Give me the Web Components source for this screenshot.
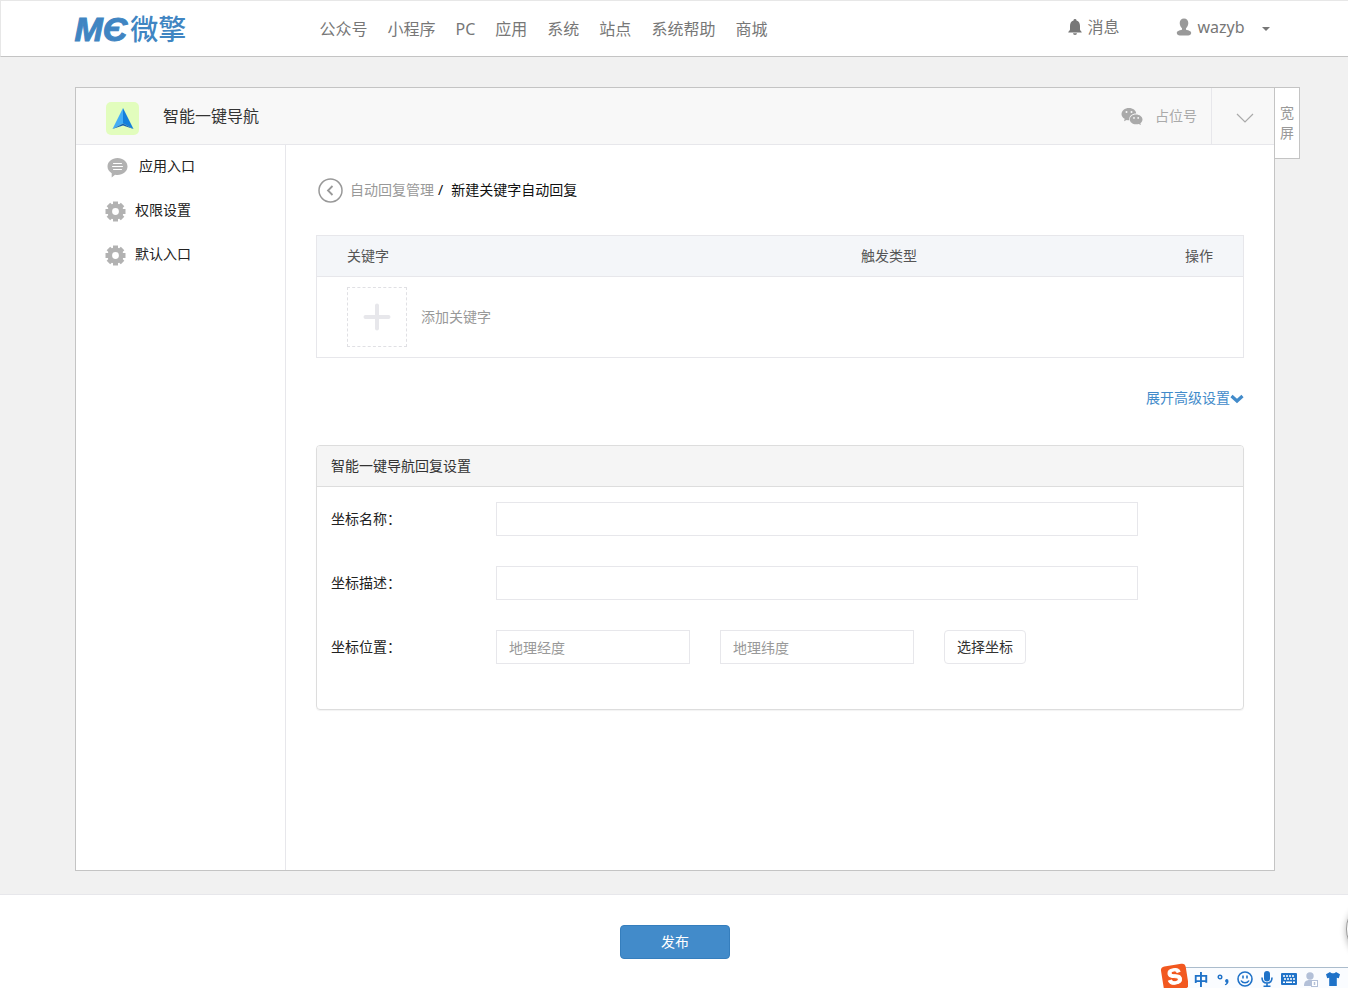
<!DOCTYPE html>
<html lang="zh-CN">
<head>
<meta charset="utf-8">
<title>新建关键字自动回复</title>
<style>
  body {
    margin: 0;
    min-height: 100vh;
    display: flex;
    flex-direction: column;
    background: #f1f1f1;
    color: #333;
    font: 14px/20px "Noto Sans", "Noto Sans CJK SC", sans-serif;
  }
  app-shell {
    flex: 1;
  }
</style>
</head>
<body>
<site-header></site-header>
<app-shell>
  <side-link slot="menu" icon="comment">应用入口</side-link>
  <side-link slot="menu" icon="gear">权限设置</side-link>
  <side-link slot="menu" icon="gear">默认入口</side-link>
  <reply-editor></reply-editor>
</app-shell>
<publish-bar>发布</publish-bar>
<float-ball></float-ball>
<ime-bar></ime-bar>

<script>
const gearTeeth = [0, 45, 90, 135, 180, 225, 270, 315]
  .map(a => `<path d="M8 5V.5h5V5z" transform="rotate(${a} 10.5 10.5)"/>`)
  .join('');

const ICONS = {
  bell: [14, 16, '<path d="M7 0a1.5 1.5 0 0 1 1.5 1.6C11 2.4 12 4.6 12 7v3.5c0 1.3 1.8 1.7 1.8 3H.2c0-1.3 1.8-1.7 1.8-3V7c0-2.4 1-4.6 3.5-5.4A1.5 1.5 0 0 1 7 0zM5 14.3h4a2 1.7 0 0 1-4 0z"/>'],
  user: [16, 18, '<path d="M8 .5c2.6 0 4.3 1.8 4.3 4.5 0 2.2-1 4.200-2.300 5.200v1.600c2.800.9 5.200 1 5.200 3.300 0 1.600-1.400 2.400-3 2.400H3.800c-1.600 0-3-.8-3-2.400 0-2.300 2.400-2.400 5.200-3.300v-1.600C4.700 9.200 3.700 7.200 3.700 5 3.700 2.300 5.400.5 8 .5z"/>'],
  comment: [25, 21, '<path d="M12.5 1C18 1 22.5 4.600 22.500 9.500S18 18 12.500 18c-1 0-1.700-.1-2.500-.3L6.700 20.500v-4.300C4 14.600 2.500 12.200 2.500 9.500 2.500 4.600 7 1 12.500 1z"/><path d="M8.500 6.500h8M7.500 9.500h10M8.500 12.500h8" stroke="#fff" stroke-linecap="round"/>'],
  gear: [21, 21, `${gearTeeth}<circle cx="10.5" cy="10.5" r="5.700" fill="none" stroke="currentColor" stroke-width="4.600"/>`],
  wechat: [22, 18, '<path fill-rule="evenodd" d="M8 1c4 0 7 2.400 7.200 5.500C11 6.500 8.200 9 8.200 12.500v.8c-.9 0-1.700-.1-2.500-.4L3 14.300l.700-2.500C1.700 10.700.5 9 .5 7.200.5 3.700 3.800 1 8 1zM5.500 4a1 1 0 1 0 0 2 1 1 0 0 0 0-2zm5 0a1 1 0 1 0 0 2 1 1 0 0 0 0-2z"/><path fill-rule="evenodd" d="M15 7.500c3.600 0 6.500 2.200 6.500 5 0 1.500-.8 2.800-2.100 3.700l.5 1.700-2.200-1c-.8.2-1.700.4-2.700.4-3.600 0-6.200-2.200-6.200-4.800 0-2.800 2.600-5 6.200-5zM13 10a.9.9 0 1 0 0 1.800.9.9 0 0 0 0-1.800zm4.200 0a.9.9 0 1 0 0 1.800.9.9 0 0 0 0-1.800z"/>'],
  angle: [18, 18, '<path d="m1 5 8 8 8-8" fill="none" stroke="currentColor" stroke-width="1.200"/>'],
  back: [25, 25, '<g fill="none" stroke="currentColor"><circle cx="12.5" cy="12.5" r="11.500" stroke-width="1.500"/><path d="m14.500 8-4.500 4.500 4.500 4.500" stroke-width="1.800"/></g>'],
  plus: [28, 28, '<path d="M14 2.500v23M2.500 14h23" stroke="currentColor" stroke-width="4" stroke-linecap="round"/>'],
  chevron: [14, 14, '<path d="m1.500 5 5.500 5 5.500-5" fill="none" stroke="currentColor" stroke-width="3.200"/>'],
  caret: [8, 4, '<path d="M0 0h8L4 4z"/>'],
  arrow: [33, 33, '<rect width="33" height="33" rx="5" fill="#e2fdbd"/><path d="M17 6 27.500 27 17 21.500z" fill="#1480dc"/><path d="M17 6 6.500 27 17 21.500z" fill="#43adf5"/><path d="m6.500 27 10.500-5.500L27.500 27 17 23.500z" fill="#1762b4"/>'],
  sogou: [28, 26, '<g transform="rotate(-9 14 14)"><rect x="2" y="3" width="25" height="25" rx="4" fill="#f2581f"/><text x="14.500" y="22" text-anchor="middle" font-family="Liberation Sans" font-weight="bold" font-size="22" fill="#fff" stroke="#fff">S</text></g>'],
  punct: [12, 14, '<circle cx="3" cy="5" r="1.800" fill="none" stroke="currentColor" stroke-width="1.400"/><path d="M9.500 7a2 2 0 0 1 2 2.200c0 2-1.200 3.600-3.300 4l-.4-1c1-.3 1.500-.8 1.600-1.400A2 2 0 0 1 9.500 7z"/>'],
  smile: [16, 16, '<g fill="none" stroke="currentColor" stroke-width="1.600"><circle cx="8" cy="8" r="7"/><path d="M6 4.500v3M10 4.500v3M4 9.500c1.500 3 6.500 3 8 0"/></g>'],
  mic: [12, 16, '<rect x="3" width="6" height="10.500" rx="3"/><path d="M1 6.500c0 3.500 2 5.500 5 5.500s5-2 5-5.500M6 12v3M2.500 15.200h7" fill="none" stroke="currentColor" stroke-width="1.600"/>'],
  keyboard: [16, 12, '<rect width="16" height="12" rx="1"/><path d="M2 3h12M3 6h11" stroke="#fff" stroke-width="1.600" stroke-dasharray="2 1"/><path d="M2 9.200h2M5 9.200h6M12 9.200h2" stroke="#fff" stroke-width="1.600"/>'],
  account: [14, 15, '<circle cx="6" cy="4" r="3.700"/><path d="M0 14c0-4 1.500-6 6-6 1 0 2 .1 2.500.4V14z"/><rect x="7.500" y="8.500" width="6" height="6" fill="#fff" stroke="currentColor"/><path d="M10.500 10v3" stroke="currentColor" stroke-width="1.500"/>'],
  shirt: [14, 14, '<path d="M4 0c1 1.700 5 1.700 6 0l4 2.200-1.200 4-2-.5V14H3.200V5.700l-2 .5L0 2.200z"/>'],
};

// Returns the shadow root, filled with the given styles and markup.
function mount(el, css, html) {
  const root = el.attachShadow({ mode: 'open' });
  root.innerHTML = `<style>* { box-sizing: border-box; } ${css}</style>${html}`;
  return root;
}

class UiIcon extends HTMLElement {
  connectedCallback() {
    if (this.shadowRoot) return;
    const [w, h, body] = ICONS[this.getAttribute('name')];
    mount(this, `
      :host { display: inline-flex; flex: none; }
      svg { display: block; }
    `, `<svg width="${w}" height="${h}" viewBox="0 0 ${w} ${h}" fill="currentColor" aria-hidden="true">${body}</svg>`);
  }
}

class SiteLogo extends HTMLElement {
  constructor() {
    super();
    mount(this, `
      :host {
        display: flex;
        align-items: center;
        gap: 3px;
        flex: none;
        width: 112px;
        line-height: 48px;
        white-space: nowrap;
        color: #4085c2;
      }
      .mark {
        font: italic 700 34px/48px "Liberation Sans", sans-serif;
        -webkit-text-stroke: 1px #4085c2;
      }
      .name { font-size: 28px; font-weight: 500; }
    `, '<span class="mark">MЄ</span><span class="name">微擎</span>');
  }
}

class SiteHeader extends HTMLElement {
  constructor() {
    super();
    const links = ['公众号', '小程序', 'PC', '应用', '系统', '站点', '系统帮助', '商城'];
    mount(this, `
      :host {
        display: block;
        background: #fff;
        border-top: 1px solid #e7e7e7;
        border-left: 1px solid #e7e7e7;
        border-bottom: 1px solid #c4c4c4;
        font-size: 16px;
        color: #777;
      }
      .inner {
        display: flex;
        align-items: center;
        max-width: 1200px;
        height: 55px;
        margin: 0 auto;
      }
      a { color: inherit; text-decoration: none; }
      nav { display: flex; margin-left: 123px; }
      nav a { padding: 0 10px; white-space: nowrap; }
      .tools {
        display: flex;
        gap: 57px;
        margin-left: auto;
        padding: 0 5px 4px 0;
      }
      .tools a { display: flex; align-items: center; gap: 5px; }
      .person { color: #999; }
      .caret { margin: 4px 0 0 12px; }
    `, `
      <div class="inner">
        <site-logo></site-logo>
        <nav>${links.map(t => `<a href="#">${t}</a>`).join('')}</nav>
        <div class="tools">
          <a href="#"><ui-icon name="bell"></ui-icon>消息</a>
          <a href="#"><ui-icon class="person" name="user"></ui-icon>wazyb<ui-icon class="caret" name="caret"></ui-icon></a>
        </div>
      </div>
    `);
  }
}

class SideLink extends HTMLElement {
  constructor() {
    super();
    mount(this, `
      :host { display: block; }
      a {
        display: flex;
        align-items: center;
        gap: 9px;
        height: 44px;
        padding-left: 29px;
        color: #222;
        text-decoration: none;
      }
      ui-icon { color: #b2b2b2; }
      span { padding-bottom: 2px; }
    `, `<a href="#"><ui-icon name="${this.getAttribute('icon')}"></ui-icon><span><slot></slot></span></a>`);
  }
}

class AppShell extends HTMLElement {
  constructor() {
    super();
    mount(this, `
      :host {
        display: flex;
        padding: 30px 0 23px 2px;
      }
      .frame {
        position: relative;
        display: flex;
        flex-direction: column;
        flex: 1;
        max-width: 1200px;
        margin: 0 auto;
        background: #fff;
        border: 1px solid #c4c4c4;
      }
      header {
        display: flex;
        align-items: center;
        height: 57px;
        padding-left: 30px;
        background: #f8f8f8;
        border-bottom: 1px solid #e7e7eb;
      }
      .app-icon { margin-top: 4px; }
      h1 {
        margin: 0 auto 0 24px;
        font-size: 16px;
        font-weight: 400;
      }
      .account {
        display: flex;
        align-items: center;
        gap: 12px;
        padding-right: 14px;
        color: #aaa;
      }
      .toggle {
        display: flex;
        align-items: center;
        justify-content: center;
        align-self: stretch;
        width: 63px;
        padding: 3px 0 0 3px;
        border: 0;
        border-left: 1px solid #e7e7eb;
        background: none;
        color: #aaa;
      }
      .body { display: flex; flex: 1; }
      aside {
        flex: none;
        width: 210px;
        border-right: 1px solid #e7e7eb;
      }
      main { flex: 1; min-width: 0; padding: 30px; }
      .wide {
        position: absolute;
        top: -1px;
        left: 100%;
        width: 26px;
        height: 72px;
        padding: 0 5px;
        background: #fff;
        border: 1px solid #c4c4c4;
        font: inherit;
        line-height: 20px;
        color: #999;
      }
    `, `
      <div class="frame">
        <header>
          <ui-icon class="app-icon" name="arrow"></ui-icon>
          <h1>智能一键导航</h1>
          <div class="account"><ui-icon name="wechat"></ui-icon>占位号</div>
          <button class="toggle" type="button" aria-label="切换"><ui-icon name="angle"></ui-icon></button>
        </header>
        <div class="body">
          <aside><slot name="menu"></slot></aside>
          <main><slot></slot></main>
        </div>
        <button class="wide" type="button">宽屏</button>
      </div>
    `);
  }
}

class KeywordTable extends HTMLElement {
  constructor() {
    super();
    mount(this, `
      :host { display: block; border: 1px solid #e7e7eb; }
      table {
        width: 100%;
        table-layout: fixed;
        border-collapse: separate;
        border-spacing: 0;
      }
      .type { width: 250px; }
      .action { width: 162px; }
      th {
        height: 41px;
        padding: 0 30px;
        background: #f4f6f9;
        border-bottom: 1px solid #e7e7eb;
        font-weight: 400;
        text-align: left;
        color: #555;
      }
      th:last-child { text-align: right; }
      td { padding: 10px 30px; }
      button {
        display: flex;
        align-items: center;
        gap: 14px;
        padding: 0;
        border: 0;
        background: none;
        font: inherit;
        color: #999;
      }
      .box {
        display: flex;
        align-items: center;
        justify-content: center;
        width: 60px;
        height: 60px;
        border: 1px dashed #e0e0e4;
        color: #e7e7eb;
      }
    `, `
      <table>
        <colgroup><col><col class="type"><col class="action"></colgroup>
        <thead><tr><th>关键字</th><th>触发类型</th><th>操作</th></tr></thead>
        <tbody>
          <tr><td colspan="3"><button type="button"><span class="box"><ui-icon name="plus"></ui-icon></span>添加关键字</button></td></tr>
        </tbody>
      </table>
    `);
  }
}

class FormPanel extends HTMLElement {
  constructor() {
    super();
    mount(this, `
      :host {
        display: block;
        border: 1px solid #ddd;
        border-radius: 4px;
        box-shadow: 0 1px 1px rgba(0, 0, 0, 0.05);
      }
      header {
        padding: 10px 14px;
        background: #f5f5f5;
        border-bottom: 1px solid #ddd;
        border-radius: 3px 3px 0 0;
      }
      section { padding: 15px 14px; }
    `, `
      <header><slot name="heading"></slot></header>
      <section><slot></slot></section>
    `);
  }
}

class ReplyEditor extends HTMLElement {
  constructor() {
    super();
    mount(this, `
      :host { display: block; }
      a { color: inherit; text-decoration: none; }
      .crumbs {
        display: flex;
        align-items: center;
        height: 30px;
        margin-bottom: 30px;
        padding-left: 2px;
        color: #111;
      }
      .crumbs a { display: flex; align-items: center; gap: 7px; color: #999; }
      .crumbs i { margin: 0 8px 0 4px; font-style: normal; }
      .more { display: flex; justify-content: flex-end; margin: 30px 0 37px; }
      .more a { display: flex; align-items: center; color: #428bca; }
      .row { display: flex; align-items: center; margin-bottom: 30px; }
      .row label { flex: none; width: 165px; color: #222; }
      .field { flex: 1; min-width: 0; margin-right: 91px; }
      .thirds {
        display: grid;
        grid-template-columns: repeat(3, 1fr);
        gap: 30px;
        justify-items: start;
      }
      input {
        display: block;
        width: 100%;
        height: 34px;
        padding: 0 12px;
        border: 1px solid #e7e7eb;
        background: #fff;
        font: inherit;
        color: #333;
      }
      input::placeholder { color: #999; opacity: 1; }
      button {
        height: 34px;
        padding: 0 12px;
        border: 1px solid #e7e7eb;
        border-radius: 4px;
        background: #fff;
        font: inherit;
        color: #333;
      }
    `, `
      <div class="crumbs">
        <a href="#"><ui-icon name="back"></ui-icon>自动回复管理</a><i>/</i><span>新建关键字自动回复</span>
      </div>
      <keyword-table></keyword-table>
      <div class="more"><a href="#">展开高级设置<ui-icon name="chevron"></ui-icon></a></div>
      <form-panel>
        <span slot="heading">智能一键导航回复设置</span>
        <div class="row">
          <label for="name">坐标名称：</label>
          <div class="field"><input id="name" type="text"></div>
        </div>
        <div class="row">
          <label for="desc">坐标描述：</label>
          <div class="field"><input id="desc" type="text"></div>
        </div>
        <div class="row">
          <label for="lng">坐标位置：</label>
          <div class="field thirds">
            <input id="lng" type="text" placeholder="地理经度">
            <input id="lat" type="text" placeholder="地理纬度" aria-label="地理纬度">
            <button type="button">选择坐标</button>
          </div>
        </div>
      </form-panel>
    `);
  }
}

class PublishBar extends HTMLElement {
  constructor() {
    super();
    mount(this, `
      :host {
        display: flex;
        justify-content: center;
        padding: 30px 0 29px 2px;
        background: #fff;
        border-top: 1px solid #e7e7eb;
      }
      button {
        width: 110px;
        height: 34px;
        border: 1px solid #357ebd;
        border-radius: 4px;
        background: #428bca;
        font: inherit;
        color: #fff;
      }
    `, '<button type="submit"><slot></slot></button>');
  }
}

// Round widget docked mostly past the right edge of the window.
class FloatBall extends HTMLElement {
  constructor() {
    super();
    mount(this, `
      :host {
        position: fixed;
        right: -60px;
        bottom: 28px;
        width: 62px;
        height: 62px;
        box-sizing: border-box;
        border: 1px solid #999;
        border-radius: 50%;
        background: #fff;
        box-shadow: 0 2px 6px rgba(0, 0, 0, 0.3);
      }
    `, '');
  }
}

class ImeBar extends HTMLElement {
  constructor() {
    super();
    const tools = ['punct', 'smile', 'mic', 'keyboard', 'account', 'shirt'];
    mount(this, `
      :host {
        position: fixed;
        right: 0;
        bottom: 0;
        display: flex;
        align-items: flex-end;
        color: #1f72c8;
      }
      .brand { margin-right: -14px; z-index: 1; }
      .bar {
        display: flex;
        align-items: center;
        height: 21px;
        padding: 2px 4px 0 16px;
        background: #fafcff;
        border-top: 1px solid #abbccc;
      }
      .bar > * {
        display: flex;
        justify-content: center;
        width: 22px;
      }
      .lang { font-size: 15px; font-weight: 700; line-height: 18px; }
      .account { color: #b3c0d8; }
    `, `
      <ui-icon class="brand" name="sogou"></ui-icon>
      <div class="bar">
        <span class="lang">中</span>
        ${tools.map(t => `<ui-icon class="${t}" name="${t}"></ui-icon>`).join('')}
      </div>
    `);
  }
}

customElements.define('ui-icon', UiIcon);
customElements.define('site-logo', SiteLogo);
customElements.define('site-header', SiteHeader);
customElements.define('side-link', SideLink);
customElements.define('keyword-table', KeywordTable);
customElements.define('form-panel', FormPanel);
customElements.define('reply-editor', ReplyEditor);
customElements.define('app-shell', AppShell);
customElements.define('publish-bar', PublishBar);
customElements.define('float-ball', FloatBall);
customElements.define('ime-bar', ImeBar);
</script>
</body>
</html>
